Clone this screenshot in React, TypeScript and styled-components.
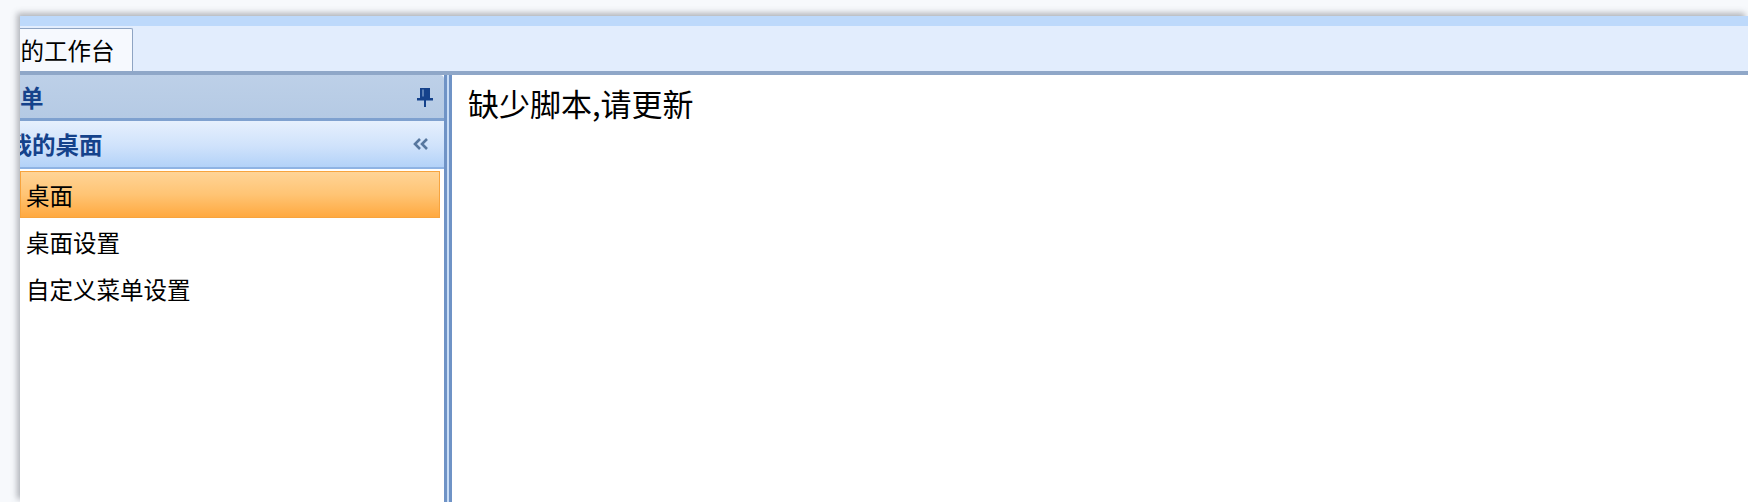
import React from "react";
import styled, { createGlobalStyle } from "styled-components";

const GlobalStyle = createGlobalStyle`
  html, body {
    margin: 0;
    padding: 0;
    background: #f7f9fc;
    overflow: hidden;
  }
  * { box-sizing: border-box; }
`;

const FONT = `"Noto Sans CJK SC", "Noto Sans", sans-serif`;

const Page = styled.div`
  width: 1748px;
  height: 502px;
  padding: 16px 0 0 20px;
  font-family: ${FONT};
`;

const Window = styled.div`
  width: 100%;
  height: 486px;
  display: flex;
  flex-direction: column;
  overflow: hidden;
  background: #ffffff;
  box-shadow: -3px -3px 6px rgba(90, 95, 105, 0.45);
`;

const TopBar = styled.div`
  height: 10px;
  flex: none;
  background: #bdd9fb;
`;

const TabStrip = styled.div`
  height: 49px;
  flex: none;
  display: flex;
  align-items: flex-end;
  background: #e2edfd;
  border-bottom: 4px solid #8fa7c8;
`;

const Tab = styled.div`
  height: 43px;
  margin-left: -44px;
  padding: 0 17px 0 20px;
  display: flex;
  align-items: center;
  background: #f6f9fe;
  border: 1px solid #8ea4c3;
  border-bottom: none;
  border-radius: 2px 2px 0 0;
  font-size: 23.5px;
  color: #000;
  white-space: nowrap;
`;

const Body = styled.div`
  flex: 1;
  display: flex;
  min-height: 0;
`;

const West = styled.div`
  width: 427px;
  flex: none;
  display: flex;
  flex-direction: column;
  border-right: 3px solid #6f93c6;
  background: #ffffff;
`;

const Splitter = styled.div`
  width: 5px;
  flex: none;
  background: #c9ddf6;
  border-right: 3px solid #6f93c6;
`;

const PanelHeader = styled.div`
  height: 46px;
  flex: none;
  display: flex;
  align-items: center;
  justify-content: space-between;
  padding-right: 10px;
  background: linear-gradient(#bdd0e8, #b5cae4);
  border-bottom: 3px solid #7fa1cf;
  border-top-right-radius: 4px;
`;

const HeaderTitle = styled.span<{ $offset: number }>`
  margin-left: ${(p) => p.$offset}px;
  font-size: 23.5px;
  font-weight: 700;
  color: #15428b;
  white-space: nowrap;
`;

const AccordionHeader = styled.div`
  height: 48px;
  flex: none;
  display: flex;
  align-items: center;
  justify-content: space-between;
  padding-right: 14px;
  background: linear-gradient(#e6f0fd, #cfe2fb 55%, #b3d2f8);
  border-bottom: 2px solid #8fb3e3;
`;

const ItemList = styled.div`
  flex: 1;
  display: flex;
  flex-direction: column;
  padding: 2px 4px 0 0;
`;

const Item = styled.div<{ $selected?: boolean }>`
  height: 47px;
  display: flex;
  align-items: center;
  padding-left: 5px;
  font-size: 23.5px;
  color: #000;
  white-space: nowrap;
  border: 1px solid ${(p) => (p.$selected ? "#f7a43e" : "transparent")};
  background: ${(p) =>
    p.$selected ? "linear-gradient(#ffd496, #ffc474 50%, #ffa940)" : "transparent"};
`;

const Center = styled.div`
  flex: 1;
  padding: 6px 16px;
  background: #ffffff;
  font-size: 31px;
  line-height: 44px;
  color: #000;
`;

const IconBox = styled.span`
  display: flex;
  align-items: center;
`;

const PinIcon = () => (
  <svg width="18" height="20" viewBox="0 0 18 20">
    <rect x="4" y="1" width="10" height="10" fill="#15428b" />
    <rect x="6" y="2.5" width="2" height="7" fill="#5a7fb5" />
    <rect x="1" y="11" width="16" height="2.5" fill="#15428b" />
    <rect x="8" y="13" width="2" height="7" fill="#15428b" />
  </svg>
);

const CollapseIcon = () => (
  <svg width="18" height="14" viewBox="0 0 18 14">
    <path d="M8 2 L3 7 L8 12" fill="none" stroke="#57779f" strokeWidth="2.6" />
    <path d="M15 2 L10 7 L15 12" fill="none" stroke="#57779f" strokeWidth="2.6" />
  </svg>
);

export default function App() {
  return (
    <>
      <GlobalStyle />
      <Page>
        <Window>
          <TopBar />
          <TabStrip>
            <Tab>我的工作台</Tab>
          </TabStrip>
          <Body>
            <West>
              <PanelHeader>
                <HeaderTitle $offset={-23.5}>菜单</HeaderTitle>
                <IconBox>
                  <PinIcon />
                </IconBox>
              </PanelHeader>
              <AccordionHeader>
                <HeaderTitle $offset={-11.5}>我的桌面</HeaderTitle>
                <IconBox>
                  <CollapseIcon />
                </IconBox>
              </AccordionHeader>
              <ItemList>
                <Item $selected>桌面</Item>
                <Item>桌面设置</Item>
                <Item>自定义菜单设置</Item>
              </ItemList>
            </West>
            <Splitter />
            <Center>缺少脚本,请更新</Center>
          </Body>
        </Window>
      </Page>
    </>
  );
}
